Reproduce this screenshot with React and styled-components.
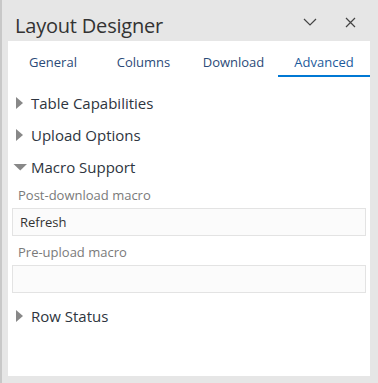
import React, { useState } from "react";
import styled, { createGlobalStyle } from "styled-components";

const Global = createGlobalStyle`
  html, body { margin: 0; padding: 0; }
  body {
    background: #e6e6e6;
    font-family: "Open Sans", "Noto Sans", sans-serif;
  }
`;

const Pane = styled.div`
  width: 378px;
  height: 383px;
  box-sizing: border-box;
  border-left: 2px solid #c8c8c8;
  background: #e6e6e6;
  padding: 0 8px 7px 6px;
  display: flex;
  flex-direction: column;
`;

const Header = styled.div`
  height: 41px;
  display: flex;
  align-items: center;
  padding: 0 0 0 7px;
`;

const Title = styled.h1`
  flex: 1;
  margin: 0;
  font-size: 20px;
  font-weight: 400;
  color: #333;
  padding-top: 9px;
  letter-spacing: -0.2px;
`;

const IconButton = styled.button`
  border: none;
  background: none;
  padding: 0;
  width: 40px;
  height: 30px;
  display: flex;
  align-items: center;
  justify-content: center;
  color: #444;
  margin-top: 3px;
`;

const Body = styled.div`
  flex: 1;
  background: #fff;
  display: flex;
  flex-direction: column;
`;

const Tabs = styled.div`
  display: grid;
  grid-template-columns: 90px 91px 89px 92px;
  height: 36px;
`;

const Tab = styled.div`
  display: flex;
  align-items: center;
  justify-content: center;
  font-size: 13px;
  color: ${(p) => (p.$active ? "#1c5a9c" : "#2b4a78")};
  border-bottom: 2px solid ${(p) => (p.$active ? "#0078d4" : "transparent")};
  box-sizing: border-box;
  padding-top: 8px;
`;

const Content = styled.div`
  padding: 10px 4px 0 4px;
  display: flex;
  flex-direction: column;
`;

const Section = styled.div`
  height: 32px;
  display: flex;
  align-items: center;
  gap: 3px;
  font-size: 15px;
  color: #2e3540;
  margin-top: ${(p) => (p.$spaced ? "3px" : "0")};
`;

const Label = styled.div`
  height: 25px;
  box-sizing: border-box;
  font-size: 13px;
  line-height: 18px;
  color: #7a7a7a;
  padding: 3px 0 0 6px;
`;

const Field = styled.div`
  height: 28px;
  box-sizing: border-box;
  border: 1px solid #e3e3e3;
  background: #fbfbfb;
  font-size: 13px;
  color: #333;
  display: flex;
  align-items: center;
  padding-left: 7px;
  margin-bottom: 4px;
`;

const Arrow = ({ open }) => (
  <svg width="16" height="14" viewBox="0 0 16 14">
    {open ? (
      <path d="M1.5 4 L15 4 L8.25 10.5 Z" fill="#888" />
    ) : (
      <path d="M4 1 L11 7 L4 13 Z" fill="#888" />
    )}
  </svg>
);

export default function App() {
  const [tab] = useState("Advanced");
  const tabs = ["General", "Columns", "Download", "Advanced"];
  return (
    <>
      <Global />
      <Pane>
        <Header>
          <Title>Layout Designer</Title>
          <IconButton>
            <svg width="14" height="8" viewBox="0 0 14 8">
              <path d="M1 1 L7 7 L13 1" stroke="#444" strokeWidth="1.2" fill="none" />
            </svg>
          </IconButton>
          <IconButton>
            <svg width="11" height="11" viewBox="0 0 11 11">
              <path d="M1 1 L10 10 M10 1 L1 10" stroke="#444" strokeWidth="1.2" fill="none" />
            </svg>
          </IconButton>
        </Header>
        <Body>
          <Tabs>
            {tabs.map((t) => (
              <Tab key={t} $active={t === tab}>
                {t}
              </Tab>
            ))}
          </Tabs>
          <Content>
            <Section>
              <Arrow /> Table Capabilities
            </Section>
            <Section>
              <Arrow /> Upload Options
            </Section>
            <Section>
              <Arrow open /> Macro Support
            </Section>
            <Label>Post-download macro</Label>
            <Field>Refresh</Field>
            <Label>Pre-upload macro</Label>
            <Field />
            <Section $spaced>
              <Arrow /> Row Status
            </Section>
          </Content>
        </Body>
      </Pane>
    </>
  );
}
